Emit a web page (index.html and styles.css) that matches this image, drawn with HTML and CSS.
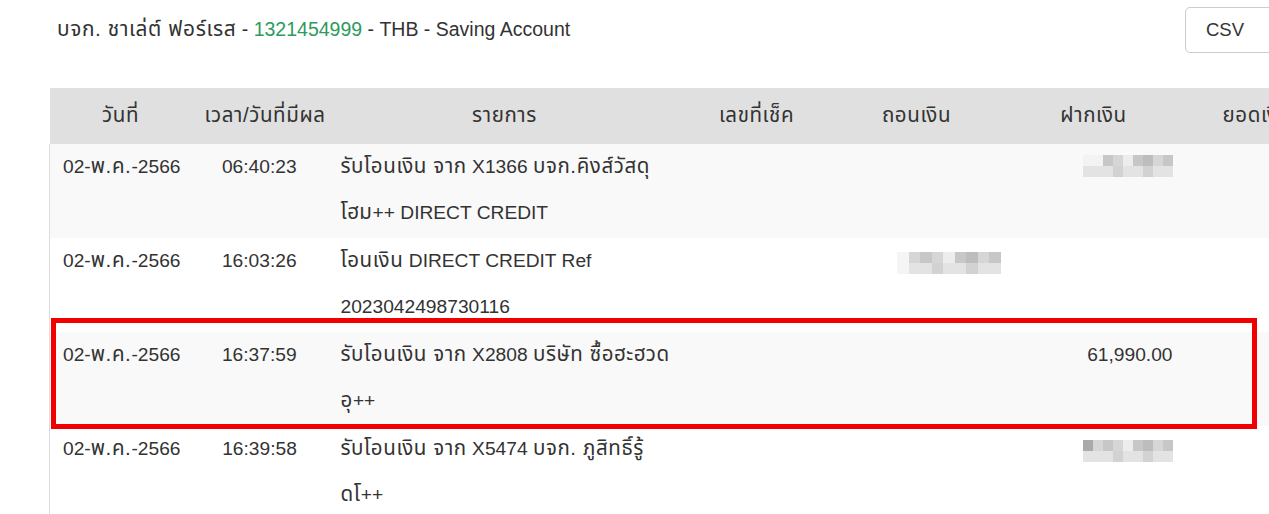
FILE: index.html
```html
<!DOCTYPE html>
<html lang="th">
<head>
<meta charset="utf-8">
<title>Statement</title>
<link rel="stylesheet" href="styles.css">
</head>
<body>
<div class="page">
  <div class="topbar">
    <div class="title"><span class="th">บจก. ชาเล่ต์ ฟอร์เรส</span> - <span class="acct">1321454999</span> - THB - Saving Account</div>
    <button class="csv">CSV</button>
  </div>
  <table class="stmt">
    <colgroup>
      <col class="c-date"><col class="c-time"><col class="c-desc"><col class="c-chq"><col class="c-wd"><col class="c-dep"><col class="c-bal">
    </colgroup>
    <thead>
      <tr>
        <th><span class="th">วันที่</span></th><th><span class="th">เวลา/วันที่มีผล</span></th><th><span class="th">รายการ</span></th><th><span class="th">เลขที่เช็ค</span></th><th><span class="th">ถอนเงิน</span></th><th><span class="th">ฝากเงิน</span></th><th class="bal"><span class="th">ยอดเงิน</span></th>
      </tr>
    </thead>
    <tbody>
      <tr class="odd">
        <td>02-<span class="th">พ.ค.</span>-2566</td><td class="ctr">06:40:23</td>
        <td><span class="th">รับโอนเงิน จาก</span> X1366 <span class="th">บจก.คิงส์วัสดุ</span><br><span class="th">โฮม</span>++ DIRECT CREDIT</td>
        <td></td><td></td>
        <td class="num"><span class="pix pa"><i></i><i></i><i></i><i></i><i></i><i></i><i></i><i></i><i></i><i></i><i></i><i></i><i></i><i></i><i></i><i></i><i></i><i></i></span></td>
        <td></td>
      </tr>
      <tr>
        <td>02-<span class="th">พ.ค.</span>-2566</td><td class="ctr">16:03:26</td>
        <td><span class="th">โอนเงิน</span> DIRECT CREDIT Ref<br>2023042498730116</td>
        <td></td>
        <td class="num"><span class="pix pb shift low"><i></i><i></i><i></i><i></i><i></i><i></i><i></i><i></i><i></i><i></i><i></i><i></i><i></i><i></i><i></i><i></i><i></i><i></i></span></td>
        <td></td><td></td>
      </tr>
      <tr class="odd">
        <td>02-<span class="th">พ.ค.</span>-2566</td><td class="ctr">16:37:59</td>
        <td><span class="th">รับโอนเงิน จาก</span> X2808 <span class="th">บริษัท ซื้อฮะฮวด</span><br><span class="th">อุ</span>++</td>
        <td></td><td></td>
        <td class="num">61,990.00</td>
        <td></td>
      </tr>
      <tr>
        <td>02-<span class="th">พ.ค.</span>-2566</td><td class="ctr">16:39:58</td>
        <td><span class="th">รับโอนเงิน จาก</span> X5474 <span class="th">บจก. ภูสิทธิ์รู้</span><br><span class="th">ดโ</span>++</td>
        <td></td><td></td>
        <td class="num"><span class="pix pc low"><i></i><i></i><i></i><i></i><i></i><i></i><i></i><i></i><i></i><i></i><i></i><i></i><i></i><i></i><i></i><i></i><i></i><i></i></span></td>
        <td></td>
      </tr>
    </tbody>
  </table>
  <div class="highlight"></div>
</div>
</body>
</html>
```

FILE: styles.css
```css
html, body {
  margin: 0;
  padding: 0;
  background: #fff;
  overflow: hidden;
}
body {
  font-family: "Liberation Sans", Arial, "Noto Sans Thai", "Tahoma", "DejaVu Sans", sans-serif;
  font-size: 19.2px;
  color: #333;
}
.th {
  font-size: 1.07em;
  letter-spacing: 0.6px;
  line-height: 1;
}
.page {
  position: relative;
  width: 1269px;
  height: 514px;
  overflow: hidden;
}
.topbar {
  display: flex;
  justify-content: space-between;
  align-items: flex-start;
  height: 88px;
  padding-left: 57px;
  box-sizing: border-box;
}
.title {
  margin-top: 17px;
  font-size: 19.5px;
  line-height: 24px;
  white-space: nowrap;
}
.acct {
  color: #2e9a5e;
}
.csv {
  margin-top: 7px;
  width: 100px;
  height: 46px;
  margin-right: -16px;
  padding: 0 0 0 20px;
  text-align: left;
  background: #fff;
  border: 1px solid #ccc;
  border-radius: 5px;
  font-family: inherit;
  font-size: 18.5px;
  color: #333;
  flex-shrink: 0;
}
.stmt {
  margin-left: 49px;
  border-collapse: collapse;
  table-layout: fixed;
  width: 1272px;
}
.c-date { width: 142px; }
.c-time { width: 136px; }
.c-desc { width: 354px; }
.c-chq { width: 150px; }
.c-wd { width: 170px; }
.c-dep { width: 184px; }
.c-bal { width: 136px; }
.stmt th {
  background: #e0e0e0;
  height: 56px;
  font-weight: normal;
  text-align: center;
  padding: 0 13px;
  white-space: nowrap;
}
.stmt th.bal {
  text-align: left;
  padding-left: 37px;
}
.stmt td {
  padding: 0 13px;
  height: 94px;
  box-sizing: border-box;
  line-height: 46px;
  vertical-align: top;
  white-space: nowrap;
}
.stmt tbody tr {
  border-left: 1px solid #ddd;
}
.stmt tbody tr.odd {
  background: #f9f9f9;
}
.stmt td.ctr { text-align: center; }
.stmt td.num { text-align: right; }
.pix {
  display: inline-grid;
  grid-template-columns: repeat(9, 10px);
  grid-template-rows: 11px 11px;
  vertical-align: middle;
  margin-top: -4px;
}
.pix.low {
  margin-top: 3px;
}
.pix.shift {
  grid-template-columns: repeat(9, 11.5px);
  margin-right: -12px;
}
.pix i { display: block; }
.pix i:nth-child(odd) { background: #e4e4e4; }
.pix i:nth-child(even) { background: #d6d6d6; }
.pix i:nth-child(3n) { background: #c7c7c7; }
.pix i:nth-child(5n) { background: #ededed; }
.pix i:nth-child(7n) { background: #bdbdbd; }
.pix i:nth-child(n+10) { background: #e3e3e3; }
.pix i:nth-child(13), .pix i:nth-child(16) { background: #d2d2d2; }
.pa i:nth-child(1), .pa i:nth-child(2) { background: #f3f3f3; }
.pb i:nth-child(1), .pb i:nth-child(10) { background: #f5f5f5; }
.pc i:nth-child(1) { background: #aaaaaa; }
.highlight {
  position: absolute;
  left: 51px;
  top: 318px;
  width: 1206px;
  height: 111px;
  box-sizing: border-box;
  border: 5px solid #f00000;
  pointer-events: none;
}
```
